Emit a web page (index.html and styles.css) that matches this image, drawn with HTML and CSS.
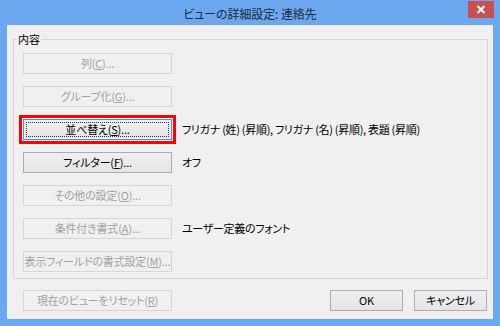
FILE: index.html
```html
<!DOCTYPE html>
<html lang="ja">
<head>
<meta charset="utf-8">
<title>ビューの詳細設定: 連絡先</title>
<link rel="stylesheet" href="styles.css">
</head>
<body>
<div class="window">
  <div class="titlebar">
    <span class="spacer"></span>
    <span class="title">ビューの詳細設定: 連絡先</span>
    <button class="close" aria-label="閉じる">
      <svg width="10" height="9" viewBox="0 0 10 9"><path d="M1.5 1 L8.5 8 M8.5 1 L1.5 8" stroke="#fff" stroke-width="2" fill="none"/></svg>
    </button>
  </div>
  <div class="client">
    <fieldset class="group">
      <legend class="legend">内容</legend>
      <div class="row"><button class="btn" disabled>列(<u>C</u>)...</button></div>
      <div class="row"><button class="btn" disabled>グループ化(<u>G</u>)...</button></div>
      <div class="row"><button class="btn focused">並べ替え(<u>S</u>)...</button><span class="value">フリガナ (姓) (昇順), フリガナ (名) (昇順), 表題 (昇順)</span></div>
      <div class="row"><button class="btn">フィルター(<u>F</u>)...</button><span class="value">オフ</span></div>
      <div class="row"><button class="btn" disabled>その他の設定(<u>O</u>)...</button></div>
      <div class="row"><button class="btn" disabled>条件付き書式(<u>A</u>)...</button><span class="value">ユーザー定義のフォント</span></div>
      <div class="row"><button class="btn" disabled>表示フィールドの書式設定(<u>M</u>)...</button></div>
    </fieldset>
    <div class="footer">
      <button class="btn" disabled>現在のビューをリセット(<u>R</u>)</button>
      <button class="btn small ok">OK</button>
      <button class="btn small">キャンセル</button>
    </div>
  </div>
</div>
</body>
</html>
```
FILE: styles.css
```css
html, body {
  margin: 0;
  padding: 0;
}
body {
  width: 500px;
  height: 326px;
  overflow: hidden;
  font-family: "Noto Sans CJK JP", "Noto Sans", sans-serif;
  font-feature-settings: "palt";
}
.window {
  width: 500px;
  height: 326px;
  box-sizing: border-box;
  background: #6ca8ef;
  padding: 0 7px 7px 7px;
  display: flex;
  flex-direction: column;
}
.titlebar {
  height: 25px;
  display: grid;
  grid-template-columns: 1fr auto 1fr;
  align-items: start;
  margin: 0 -7px;
}
.title {
  font-size: 12px;
  line-height: 14px;
  padding-top: 7px;
  color: #1e2a3a;
  letter-spacing: -0.1px;
}
.close {
  justify-self: end;
  margin: 1px 6px 0 0;
  width: 26px;
  height: 17px;
  padding: 0;
  border: none;
  background: #c75050;
  display: flex;
  align-items: center;
  justify-content: center;
}
.client {
  flex: 1;
  background: #f0f0f0;
  display: flex;
  flex-direction: column;
  padding: 7px 6px 7px 6px;
}
.group {
  margin: 0 -1px 0 0;
  padding: 7px 0 6px 9px;
  border: 1px solid #d5d5d5;
  min-width: 0;
  display: flex;
  flex-direction: column;
  gap: 12px;
}
.legend {
  font-size: 11px;
  line-height: 14px;
  padding: 0 2px;
  margin-left: -7px;
  color: #000;
}
.row {
  display: flex;
  align-items: center;
  gap: 10px;
  height: 21px;
}
.btn {
  font-family: inherit;
  font-feature-settings: "palt";
  font-size: 11px;
  line-height: 13px;
  width: 149px;
  height: 21px;
  padding: 0;
  box-sizing: border-box;
  border: 1px solid #acacac;
  background: linear-gradient(#f0f0f0, #e5e5e5);
  color: #000;
  letter-spacing: -0.2px;
  position: relative;
  flex: none;
}
.btn:disabled {
  background: #f0f0f0;
  border-color: #d6d6d6;
  color: #a2a2a2;
}
.btn.focused {
  border-color: #3399ff;
  box-shadow: inset 0 0 0 1px #e4f0fb;
  outline: 3px solid #ff0000;
  outline-offset: 1px;
}
.btn.focused::after {
  content: "";
  position: absolute;
  inset: 2px;
  border: 1px dotted #333;
}
.value {
  font-size: 11px;
  line-height: 13px;
  color: #000;
  white-space: nowrap;
  letter-spacing: -0.3px;
}
.footer {
  margin-top: 11px;
  display: flex;
  padding-left: 10px;
  gap: 11px;
}
.btn.small {
  width: 73px;
}
.btn.ok {
  margin-left: auto;
}
```
